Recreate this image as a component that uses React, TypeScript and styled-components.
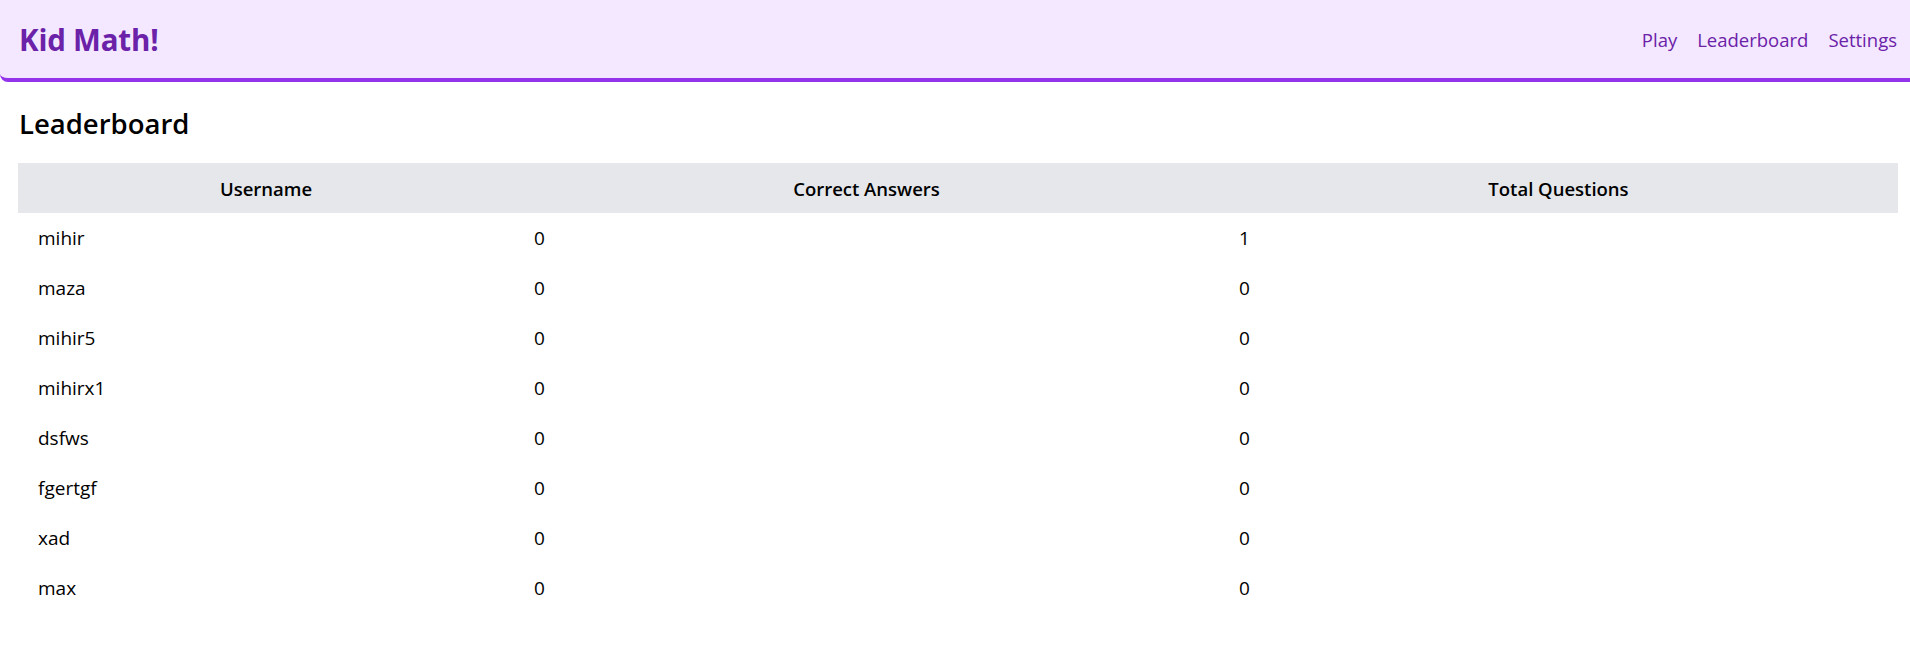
import React from "react";
import styled, { createGlobalStyle } from "styled-components";

const GlobalStyle = createGlobalStyle`
  html, body {
    margin: 0;
    padding: 0;
    background: #ffffff;
    font-family: "Open Sans", "Noto Sans", "Liberation Sans", sans-serif;
    color: #000000;
  }
  * { box-sizing: border-box; }
`;

const Header = styled.header`
  display: flex;
  align-items: center;
  justify-content: space-between;
  height: 82px;
  padding: 0 13px 0 19px;
  background: #f3e8ff;
  border-bottom: 4px solid #9333ea;
  border-bottom-left-radius: 8px;
`;

const Brand = styled.h1`
  margin: 0;
  font-size: 29.5px;
  font-weight: 700;
  color: #6b21a8;
  letter-spacing: -0.2px;
`;

const Nav = styled.nav`
  display: flex;
  align-items: center;
  gap: 20px;
`;

const NavLink = styled.a`
  font-size: 18.5px;
  color: #6b21a8;
  text-decoration: none;
  cursor: pointer;
`;

const Main = styled.main`
  padding: 24px 12px 0 18px;
`;

const Title = styled.h2`
  margin: 0 0 21px 0;
  font-size: 27.5px;
  font-weight: 600;
  line-height: 36px;
  padding-left: 1px;
`;

const Table = styled.table`
  width: 1880px;
  border-collapse: collapse;
  table-layout: fixed;
`;

const HeadRow = styled.tr`
  background: #e5e7eb;
`;

const HeadCell = styled.th`
  height: 50px;
  padding: 0 20px;
  font-size: 18.5px;
  font-weight: 600;
  text-align: center;
`;

const Cell = styled.td`
  height: 50px;
  padding: 0 20px;
  font-size: 19px;
  text-align: left;
`;

const rows = [
  ["mihir", 0, 1],
  ["maza", 0, 0],
  ["mihir5", 0, 0],
  ["mihirx1", 0, 0],
  ["dsfws", 0, 0],
  ["fgertgf", 0, 0],
  ["xad", 0, 0],
  ["max", 0, 0],
] as const;

export default function App() {
  return (
    <>
      <GlobalStyle />
      <Header>
        <Brand>Kid Math!</Brand>
        <Nav>
          <NavLink>Play</NavLink>
          <NavLink>Leaderboard</NavLink>
          <NavLink>Settings</NavLink>
        </Nav>
      </Header>
      <Main>
        <Title>Leaderboard</Title>
        <Table>
          <colgroup>
            <col style={{ width: 496 }} />
            <col style={{ width: 705 }} />
            <col style={{ width: 679 }} />
          </colgroup>
          <thead>
            <HeadRow>
              <HeadCell>Username</HeadCell>
              <HeadCell>Correct Answers</HeadCell>
              <HeadCell>Total Questions</HeadCell>
            </HeadRow>
          </thead>
          <tbody>
            {rows.map(([name, correct, total]) => (
              <tr key={name}>
                <Cell>{name}</Cell>
                <Cell>{correct}</Cell>
                <Cell>{total}</Cell>
              </tr>
            ))}
          </tbody>
        </Table>
      </Main>
    </>
  );
}
